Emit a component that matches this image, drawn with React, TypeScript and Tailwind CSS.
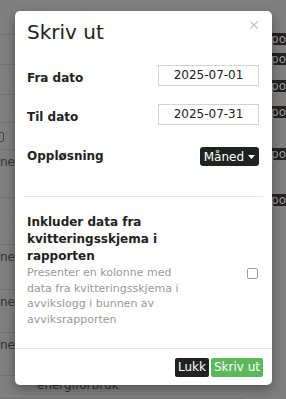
const font = "font-['DejaVu_Sans',Verdana,sans-serif]"

// rows of the page behind the dialog: height and what shows at the left edge
const bgRows: { h: string; content?: 'check' | 'ned' | 'energi' }[] = [
  { h: 'h-[35px]' },
  { h: 'h-[30px]' },
  { h: 'h-[30px]' },
  { h: 'h-[28px]' },
  { h: 'h-[27px]', content: 'check' },
  { h: 'h-[48px]', content: 'ned' },
  { h: 'h-[47px]' },
  { h: 'h-[45px]', content: 'ned' },
  { h: 'h-[43px]', content: 'ned' },
  { h: 'h-[43px]', content: 'ned' },
  { h: 'h-[23px]', content: 'energi' },
]

const bgButtons = ['mt-[33px]', 'mt-[8px]', 'mt-[15px]', 'mt-[14px]', 'mt-[30px]', 'mt-[34px]']

function Backdrop() {
  return (
    <div className="flex w-[286px] h-[399px] bg-[#7f7f7f] overflow-hidden">
      <div className="flex flex-col w-[244px] shrink-0">
        {bgRows.map((r, i) => (
          <div key={i} className={`${r.h} shrink-0 border-b border-[#737373] text-[12px] text-[#333]`}>
            {r.content === 'check' && (
              <div className="mt-[9px] ml-[-8px] w-[12px] h-[10px] border border-[#444] rounded-[2px]" />
            )}
            {r.content === 'ned' && <div className="mt-[4px] leading-[17px]">ned</div>}
            {r.content === 'energi' && <div className="mt-[1px] ml-[37px] leading-[17px]">energiforbruk</div>}
          </div>
        ))}
      </div>
      <div className="flex flex-col items-start w-[60px] shrink-0">
        {bgButtons.map((m, i) => (
          <div key={i} className={`${m} h-[12px] pl-[4px] pr-[5px] bg-[#232323] text-[12px] leading-[12px] text-[#9a9a9a] whitespace-nowrap`}>
            Rapport
          </div>
        ))}
      </div>
    </div>
  )
}

function DateRow({ label, value }: { label: string; value: string }) {
  return (
    <div className="flex justify-between items-start h-[39px] px-[4px]">
      <span className="pt-[7px] text-[12px] leading-[17px] font-bold text-[#222]">{label}</span>
      <div className="mt-[2px] w-[101px] h-[21px] border border-[#d4d4d4] text-center text-[12px] leading-[19px] text-[#222]">
        {value}
      </div>
    </div>
  )
}

export default function App() {
  return (
    <div className={`relative w-[286px] h-[399px] overflow-hidden ${font}`}>
      <Backdrop />

      <div className="absolute inset-0 pt-[11px] pl-[15px]">
        <div className="flex flex-col w-[257px] h-[374px] bg-white rounded-[5px] shadow-[0_4px_12px_rgba(0,0,0,0.35)]">
          {/* Header */}
          <div className="flex justify-between items-start pt-[10px] pl-[12px] pr-[14px]">
            <h4 className="text-[20px] leading-[22px] text-[#222]">Skriv ut</h4>
            <svg width="8" height="8" viewBox="0 0 8 8">
              <path d="M0.5 0.5L7.5 7.5M7.5 0.5L0.5 7.5" stroke="#c4c4c4" strokeWidth="1.1" />
            </svg>
          </div>

          {/* Body */}
          <div className="flex-1 pt-[20px] pl-[8px] pr-[9px]">
            <DateRow label="Fra dato" value="2025-07-01" />
            <DateRow label="Til dato" value="2025-07-31" />
            <div className="flex justify-between items-start h-[39px] px-[4px]">
              <span className="pt-[7px] text-[12px] leading-[17px] font-bold text-[#222]">Oppløsning</span>
              <button className="mt-[6px] flex items-center gap-[4px] h-[19px] px-[4px] rounded-[3px] bg-[#1e2320] text-white text-[12px]">
                Måned
                <svg width="7" height="4" viewBox="0 0 7 4">
                  <path d="M0 0H7L3.5 4Z" fill="white" />
                </svg>
              </button>
            </div>

            <div className="mt-[16px] border-t border-[#e5e5e5]" />

            <div className="mt-[17px] px-[4px]">
              <p className="w-[156px] text-[12px] leading-[17px] font-bold text-[#222]">
                Inkluder data fra kvitteringsskjema i rapporten
              </p>
              <div className="flex justify-between items-start">
                <p className="w-[156px] text-[11px] leading-[15.7px] text-[#999]">
                  Presenter en kolonne med data fra kvitteringsskjema i avvikslogg i bunnen av avviksrapporten
                </p>
                <div className="mt-[3px] mr-[1px] w-[11px] h-[11px] border border-[#9a9a9a] rounded-[2px] bg-white" />
              </div>
            </div>
          </div>

          {/* Footer */}
          <div className="flex justify-end items-start gap-[2px] h-[37px] pt-[9px] pr-[9px] border-t border-[#e5e5e5]">
            <button className="h-[19px] px-[3px] rounded-[2px] bg-[#1e2320] text-white text-[12px] leading-[19px]">Lukk</button>
            <button className="h-[19px] px-[3px] rounded-[2px] bg-[#5cb85c] text-white text-[12px] leading-[19px]">Skriv ut</button>
          </div>
        </div>
      </div>
    </div>
  )
}
